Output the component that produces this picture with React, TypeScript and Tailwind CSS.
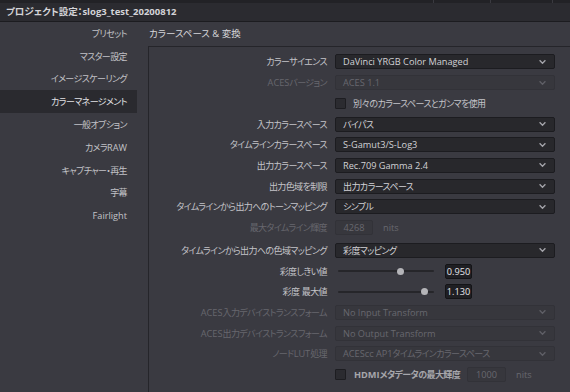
import React from "react";

const FONT = "font-['Open_Sans','Noto_Sans_CJK_JP',sans-serif] [font-feature-settings:'palt']";

function T({ children, track = true }: { children: string; track?: boolean }) {
  const parts = children.split(/([\u3000-\u30ff\u4e00-\u9fff\uff00-\uffef]+)/).filter((p) => p.length > 0);
  return (
    <>
      {parts.map((p, i) =>
        /[\u3000-\u30ff\u4e00-\u9fff\uff00-\uffef]/.test(p) ? (
          <span key={i} className={track ? "tracking-[-0.6px]" : ""}>
            {p}
          </span>
        ) : (
          <span key={i} className="text-[9.2px]">
            {p}
          </span>
        )
      )}
    </>
  );
}

function Chevron({ dim }: { dim?: boolean }) {
  return (
    <svg width="7" height="5" viewBox="0 0 7 5" className="absolute right-[8px] top-1/2 -translate-y-1/2">
      <polyline points="0.6,0.8 3.5,3.8 6.4,0.8" fill="none" stroke={dim ? "#5f5f66" : "#a4a4aa"} strokeWidth="1.3" />
    </svg>
  );
}

function Dropdown({ value, disabled }: { value: string; disabled?: boolean }) {
  return (
    <div
      className={
        disabled
          ? "relative w-[220px] h-[15px] rounded-[2px] border border-[#323238] bg-[#37373d] text-[#68686f] flex items-center pl-[7px]"
          : "relative w-[220px] h-[15px] rounded-[2px] border border-[#1c1c20] bg-[#28282c] text-[#d2d2d6] flex items-center pl-[7px]"
      }
    >
      <span className="leading-none">
        <T>{value}</T>
      </span>
      <Chevron dim={disabled} />
    </div>
  );
}

function Row({
  label,
  disabled,
  children,
  extra,
}: {
  label?: string;
  disabled?: boolean;
  children: React.ReactNode;
  extra?: string;
}) {
  return (
    <div className={"flex items-center h-[20.7px] " + (extra ?? "")}>
      <div className={"w-[178px] text-right leading-none " + (disabled ? "text-[#67676e]" : "text-[#c4c4c9]")}>
        {label ? <T>{label}</T> : null}
      </div>
      <div className="ml-[8px] flex items-center">{children}</div>
    </div>
  );
}

function Checkbox() {
  return <div className="w-[11px] h-[11px] rounded-[1px] border border-[#1d1d21] bg-[#2b2b30]" />;
}

function Slider({ pos, value }: { pos: number; value: string }) {
  return (
    <div className="flex items-center">
      <div className="relative w-[96px] h-[7px] ml-[3px] flex items-center">
        <div className="w-full h-[2px] bg-[#26262a] rounded-full" />
        <div
          className="absolute top-0 w-[7px] h-[7px] rounded-full bg-[#b4b4b8]"
          style={{ left: pos - 3.5 }}
        />
      </div>
      <div className="ml-[11px] w-[27px] h-[15px] rounded-[2px] border border-[#141417] bg-[#1f1f23] text-[#e6e6ea] text-[9.2px] flex items-center justify-center leading-none">
        {value}
      </div>
    </div>
  );
}

const sideItems = [
  "プリセット",
  "マスター設定",
  "イメージスケーリング",
  "カラーマネージメント",
  "一般オプション",
  "カメラRAW",
  "キャプチャー・再生",
  "字幕",
  "Fairlight",
];

export default function App() {
  return (
    <div className={"w-[570px] h-[392px] overflow-hidden bg-[#3a3a41] flex flex-col text-[9px] " + FONT}>
      <div className="h-[3px] bg-[#222226] flex">
        <div className="w-[433px]" />
        <div className="w-px bg-[#3a3a40]" />
        <div className="w-[56px]" />
        <div className="w-px bg-[#3a3a40]" />
        <div className="w-[61px]" />
        <div className="w-px bg-[#3a3a40]" />
      </div>
      <div className="h-[19px] bg-[#2b2b30] border-b border-[#1c1c20] flex items-center pl-[6px] text-[9.5px] font-bold text-[#d4d4d8] leading-none">
        プロジェクト設定：slog3_test_20200812
      </div>
      <div className="flex flex-1 min-h-0">
        <div className="w-[137px] flex flex-col">
          {sideItems.map((s) => (
            <div
              key={s}
              className={
                "h-[22.8px] flex items-center justify-end pr-[10px] leading-none " +
                (s === "カラーマネージメント" ? "bg-[#2a2a2f] text-[#e2e2e6]" : "text-[#c2c2c7]")
              }
            >
              <span>
                <T>{s}</T>
              </span>
            </div>
          ))}
        </div>
        <div className="flex-1 flex flex-col pl-[11px]">
          <div className="h-[24px] flex items-center pl-[1px] text-[9.5px] text-[#d6d6da] leading-none">
            カラースペース &amp; 変換
          </div>
          <div className="flex-1 border-t border-l border-[#25252a] bg-[#3a3a41] flex flex-col pt-[4.6px]">
            <Row label="カラーサイエンス">
              <Dropdown value="DaVinci YRGB Color Managed" />
            </Row>
            <Row label="ACESバージョン" disabled>
              <Dropdown value="ACES 1.1" disabled />
            </Row>
            <Row>
              <Checkbox />
              <span className="ml-[7px] text-[#c4c4c9] leading-none">
                <T>別々のカラースペースとガンマを使用</T>
              </span>
            </Row>
            <Row label="入力カラースペース">
              <Dropdown value="バイパス" />
            </Row>
            <Row label="タイムラインカラースペース">
              <Dropdown value="S-Gamut3/S-Log3" />
            </Row>
            <Row label="出力カラースペース">
              <Dropdown value="Rec.709 Gamma 2.4" />
            </Row>
            <Row label="出力色域を制限">
              <Dropdown value="出力カラースペース" />
            </Row>
            <Row label="タイムラインから出力へのトーンマッピング">
              <Dropdown value="シンプル" />
            </Row>
            <Row label="最大タイムライン輝度" disabled>
              <div className="w-[38px] h-[15px] rounded-[2px] border border-[#323238] bg-[#37373d] text-[#68686f] text-[9.2px] flex items-center justify-center leading-none">
                4268
              </div>
              <span className="ml-[10px] text-[#68686f] text-[9.2px] leading-none">nits</span>
            </Row>
            <Row label="タイムラインから出力への色域マッピング" extra="mt-[2.3px]">
              <Dropdown value="彩度マッピング" />
            </Row>
            <Row label="彩度しきい値">
              <Slider pos={62} value="0.950" />
            </Row>
            <Row label="彩度 最大値">
              <Slider pos={86} value="1.130" />
            </Row>
            <Row label="ACES入力デバイストランスフォーム" disabled>
              <Dropdown value="No Input Transform" disabled />
            </Row>
            <Row label="ACES出力デバイストランスフォーム" disabled>
              <Dropdown value="No Output Transform" disabled />
            </Row>
            <Row label="ノードLUT処理" disabled>
              <Dropdown value="ACEScc AP1タイムラインカラースペース" disabled />
            </Row>
            <Row>
              <Checkbox />
              <span className="ml-[8px] font-bold text-[#a6a6ab] leading-none">
                <T>HDMIメタデータの最大輝度</T>
              </span>
              <div className="ml-[7px] w-[39px] h-[15px] rounded-[2px] border border-[#323238] bg-[#37373d] text-[#68686f] text-[9.2px] flex items-center justify-center leading-none">
                1000
              </div>
              <span className="ml-[10px] text-[#68686f] text-[9.2px] leading-none">nits</span>
            </Row>
          </div>
        </div>
      </div>
    </div>
  );
}
